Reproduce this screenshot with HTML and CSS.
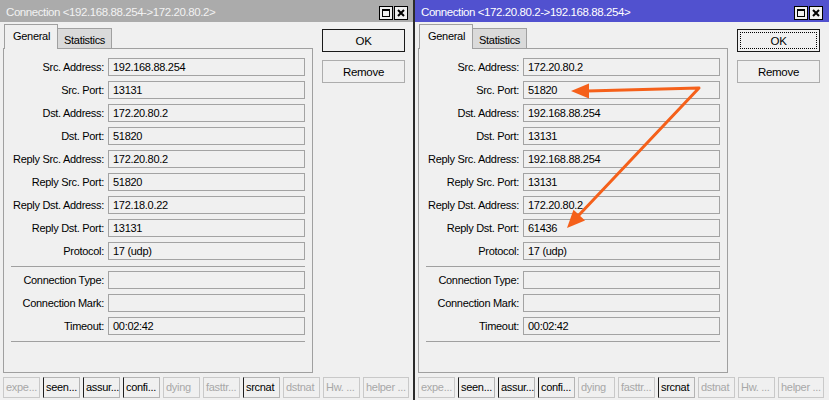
FILE: index.html
```html
<!DOCTYPE html>
<html lang="en">
<head>
<meta charset="utf-8">
<title>Connections</title>
<link rel="stylesheet" href="styles.css">
</head>
<body>
<div class="desk">

  <section class="win inactive">
    <header class="titlebar">
      <span class="title">Connection &lt;192.168.88.254-&gt;172.20.80.2&gt;</span>
      <span class="tb-btns">
        <span class="tb-btn"><svg viewBox="0 0 12 12" width="12" height="12"><rect x="2.5" y="2.5" width="7" height="7" fill="none" stroke="#000"/><line x1="2" y1="3" x2="10" y2="3" stroke="#000" stroke-width="2"/></svg></span>
        <span class="tb-btn"><svg viewBox="0 0 12 12" width="12" height="12"><path d="M3 3 L9 9 M9 3 L3 9" stroke="#000" stroke-width="2"/></svg></span>
      </span>
    </header>
    <div class="win-body">
      <div class="tabbed">
        <div class="tabs">
          <div class="tab active">General</div>
          <div class="tab">Statistics</div>
        </div>
        <div class="panel">
          <div class="form">
            <label>Src. Address:</label><div class="field">192.168.88.254</div>
            <label>Src. Port:</label><div class="field">13131</div>
            <label>Dst. Address:</label><div class="field">172.20.80.2</div>
            <label>Dst. Port:</label><div class="field">51820</div>
            <label>Reply Src. Address:</label><div class="field">172.20.80.2</div>
            <label>Reply Src. Port:</label><div class="field">51820</div>
            <label>Reply Dst. Address:</label><div class="field">172.18.0.22</div>
            <label>Reply Dst. Port:</label><div class="field">13131</div>
            <label>Protocol:</label><div class="field">17 (udp)</div>
            <div class="sep sep-a"></div>
            <label>Connection Type:</label><div class="field"></div>
            <label>Connection Mark:</label><div class="field"></div>
            <label>Timeout:</label><div class="field">00:02:42</div>
            <div class="sep sep-b"></div>
          </div>
        </div>
      </div>
      <div class="actions">
        <button class="btn default">OK</button>
        <button class="btn">Remove</button>
      </div>
    </div>
    <div class="statusbar">
      <span class="cell off">expe...</span>
      <span class="cell on">seen...</span>
      <span class="cell on">assur...</span>
      <span class="cell on">confi...</span>
      <span class="cell off">dying</span>
      <span class="cell off">fasttr...</span>
      <span class="cell on">srcnat</span>
      <span class="cell off">dstnat</span>
      <span class="cell off">Hw. ...</span>
      <span class="cell off wide">helper ...</span>
    </div>
  </section>

  <div class="divider"></div>

  <section class="win active">
    <header class="titlebar">
      <span class="title">Connection &lt;172.20.80.2-&gt;192.168.88.254&gt;</span>
      <span class="tb-btns">
        <span class="tb-btn"><svg viewBox="0 0 12 12" width="12" height="12"><rect x="2.5" y="2.5" width="7" height="7" fill="none" stroke="#000"/><line x1="2" y1="3" x2="10" y2="3" stroke="#000" stroke-width="2"/></svg></span>
        <span class="tb-btn"><svg viewBox="0 0 12 12" width="12" height="12"><path d="M3 3 L9 9 M9 3 L3 9" stroke="#000" stroke-width="2"/></svg></span>
      </span>
    </header>
    <div class="win-body">
      <div class="tabbed">
        <div class="tabs">
          <div class="tab active">General</div>
          <div class="tab">Statistics</div>
        </div>
        <div class="panel">
          <div class="form">
            <label>Src. Address:</label><div class="field">172.20.80.2</div>
            <label>Src. Port:</label><div class="field">51820</div>
            <label>Dst. Address:</label><div class="field">192.168.88.254</div>
            <label>Dst. Port:</label><div class="field">13131</div>
            <label>Reply Src. Address:</label><div class="field">192.168.88.254</div>
            <label>Reply Src. Port:</label><div class="field">13131</div>
            <label>Reply Dst. Address:</label><div class="field">172.20.80.2</div>
            <label>Reply Dst. Port:</label><div class="field">61436</div>
            <label>Protocol:</label><div class="field">17 (udp)</div>
            <div class="sep sep-a"></div>
            <label>Connection Type:</label><div class="field"></div>
            <label>Connection Mark:</label><div class="field"></div>
            <label>Timeout:</label><div class="field">00:02:42</div>
            <div class="sep sep-b"></div>
          </div>
        </div>
      </div>
      <div class="actions">
        <button class="btn default focused"><span class="focus-ring">OK</span></button>
        <button class="btn">Remove</button>
      </div>
    </div>
    <div class="statusbar">
      <span class="cell off">expe...</span>
      <span class="cell on">seen...</span>
      <span class="cell on">assur...</span>
      <span class="cell on">confi...</span>
      <span class="cell off">dying</span>
      <span class="cell off">fasttr...</span>
      <span class="cell on">srcnat</span>
      <span class="cell off">dstnat</span>
      <span class="cell off">Hw. ...</span>
      <span class="cell off wide">helper ...</span>
    </div>

    <!-- annotation arrows: src port -> reply dst port -->
    <svg class="arrows" width="414" height="400" viewBox="0 0 414 400">
      <polyline points="172,91 284,88 164,215" fill="none" stroke="#f5601a" stroke-width="3" stroke-linejoin="round" stroke-linecap="round"/>
      <polygon points="156,91 174,83.5 174,98.5" fill="#f5601a"/>
      <polygon points="152,228 170,220.6 158.5,209.8" fill="#f5601a"/>
    </svg>
  </section>

</div>
</body>
</html>
```

FILE: styles.css
```css
html, body {
  margin: 0;
  padding: 0;
  background: #f0f0f0;
}

body {
  font-family: "Liberation Sans", Arial, sans-serif;
  font-size: 11px;
  letter-spacing: -0.3px;
  color: #000;
}

.desk {
  display: flex;
  width: 829px;
  height: 400px;
  overflow: hidden;
}

.divider {
  width: 2px;
  background: #2b2b2b;
}

.win {
  position: relative;
  width: 413px;
  height: 400px;
  background: #f0f0f0;
  display: flex;
  flex-direction: column;
}

.win.active {
  width: 414px;
}

/* title bar */
.titlebar {
  height: 22px;
  display: flex;
  align-items: center;
  justify-content: space-between;
  padding: 0 5px 0 6px;
  box-sizing: border-box;
}

.inactive .titlebar {
  background: #ababab;
  color: #f2f2f2;
}

.active .titlebar {
  background: #5151cf;
  color: #fff;
  padding-left: 6px;
  padding-right: 6px;
}

.title {
  font-size: 11.5px;
  letter-spacing: -0.42px;
  padding-top: 1px;
}

.tb-btns {
  display: flex;
  gap: 1px;
  padding-top: 3px;
}

.tb-btn {
  width: 14px;
  height: 14px;
  box-sizing: border-box;
  border: 1px solid #000;
  background: #f0f0f0;
  display: flex;
  align-items: center;
  justify-content: center;
}

.tb-btn svg {
  display: block;
}

/* body: tab area + button column */
.win-body {
  display: grid;
  grid-template-columns: 310px 83px;
  column-gap: 9px;
  padding: 2px 0 0 3px;
}

.tabs {
  display: flex;
  align-items: flex-end;
  height: 24px;
  position: relative;
  z-index: 1;
}

.tab {
  box-sizing: border-box;
  height: 20px;
  border: 1px solid #a0a0a0;
  border-bottom: none;
  background: #dadada;
  display: flex;
  align-items: center;
  padding: 0 6px;
}

.tab.active {
  height: 25px;
  margin-bottom: -1px;
  background: #f0f0f0;
  padding: 0 7px 3px 8px;
  margin-left: 1px;
}

.tab.active + .tab {
  border-left: none;
  padding-top: 2px;
}

.panel {
  box-sizing: border-box;
  width: 310px;
  height: 325px;
  border: 1px solid #a0a0a0;
  padding: 9px 7px 0 0;
}

.form {
  display: grid;
  grid-template-columns: 100px 197px;
  grid-template-rows: repeat(9, 18px) 1px repeat(3, 18px) 1px;
  column-gap: 4px;
  row-gap: 5px;
}

.form label {
  text-align: right;
  line-height: 18px;
  white-space: nowrap;
}

.field {
  box-sizing: border-box;
  height: 18px;
  border: 1px solid #a3a3a3;
  background: #f0f0f0;
  padding: 0 4px;
  line-height: 16px;
  white-space: nowrap;
}

.sep {
  grid-column: 1 / -1;
  height: 1px;
  margin-left: 7px;
  background: #a0a0a0;
}

.sep-a {
  margin-top: 1px;
  margin-bottom: -1px;
}

.sep-b {
  margin-top: 1px;
}

/* buttons */
.actions {
  display: flex;
  flex-direction: column;
  gap: 8px;
  padding-top: 5px;
}

.btn {
  box-sizing: border-box;
  width: 83px;
  height: 23px;
  font: inherit;
  letter-spacing: inherit;
  font-size: 11.5px;
  color: #000;
  background: #f0f0f0;
  border: 1px solid #adadad;
  padding: 0;
  display: flex;
  align-items: center;
  justify-content: center;
}

.btn.default {
  border-color: #1a1a1a;
}

.btn.focused {
  padding: 2px;
}

.focus-ring {
  box-sizing: border-box;
  width: 100%;
  height: 100%;
  border: 1px dotted #000;
  display: flex;
  align-items: center;
  justify-content: center;
}

/* status bar */
.statusbar {
  display: flex;
  gap: 3px;
  margin-top: 4px;
  padding-left: 3px;
}

.cell {
  box-sizing: border-box;
  width: 37px;
  height: 21px;
  line-height: 19px;
  padding-left: 2px;
  white-space: nowrap;
  overflow: hidden;
  border: 1px solid #c9c9c9;
}

.cell.wide {
  width: 46px;
}

.cell.on {
  color: #000;
  border-color: #b4b4b4;
  border-left-color: #1e1e1e;
}

.cell.off {
  color: #a8a8a8;
}

/* annotation overlay */
.arrows {
  position: absolute;
  left: 0;
  top: 0;
  pointer-events: none;
}
```
